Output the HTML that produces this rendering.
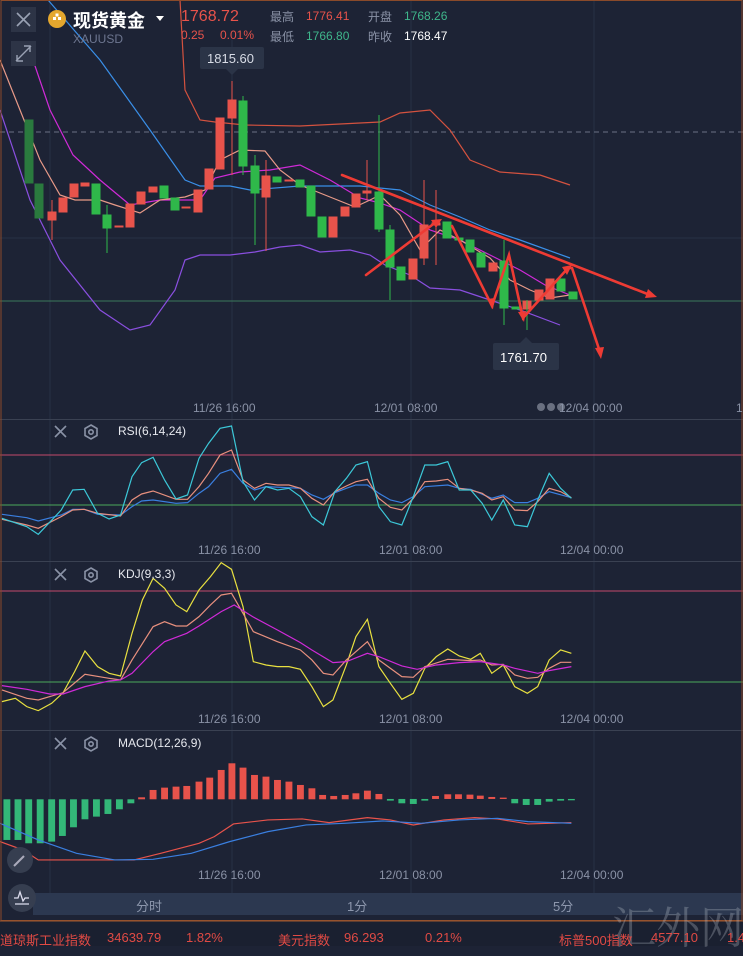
<!DOCTYPE html>
<html><head><meta charset="utf-8"><style>
*{margin:0;padding:0}
body{width:743px;height:946px;background:#1d2335;overflow:hidden;position:relative;font-family:"Liberation Sans","Noto Sans CJK SC",sans-serif}
.t{position:absolute;white-space:nowrap}
svg{position:absolute;left:0;top:0}
</style></head><body>
<svg width="743" height="946" viewBox="0 0 743 946">
<rect x="0" y="0" width="743" height="946" fill="#1d2335"/>
<g stroke="#283045" stroke-width="1">
<line x1="50" y1="0" x2="50" y2="893"/><line x1="232" y1="40" x2="232" y2="893"/><line x1="411" y1="0" x2="411" y2="893"/><line x1="594" y1="0" x2="594" y2="893"/>
<line x1="0" y1="238" x2="743" y2="238"/>
</g>
<line x1="0" y1="132" x2="743" y2="132" stroke="#6a7285" stroke-dasharray="5,4" stroke-width="1"/>
<line x1="0" y1="301" x2="743" y2="301" stroke="#3a7a5a" stroke-width="1"/>
<g stroke="#3a4152"><line x1="0" y1="419.5" x2="743" y2="419.5"/><line x1="0" y1="561.5" x2="743" y2="561.5"/><line x1="0" y1="730.5" x2="743" y2="730.5"/></g>
<g fill="none" stroke-width="1.2">
<polyline stroke="#d4523f" points="180,0 185,90 200,120 215,122 245,125 300,126 380,122 400,113 430,110 450,130 470,160 500,172 540,175 570,185"/>
<polyline stroke="#8a4fe0" points="0,110 30,200 60,260 100,310 130,330 150,325 175,290 185,260 200,255 230,255 255,252 280,247 300,245 320,252 350,250 370,255 385,265 410,275 430,288 460,290 490,300 520,310 560,325"/>
<polyline stroke="#3a8fe8" points="48,0 100,60 150,130 185,180 200,186 230,186 250,190 300,186 360,186 400,190 430,205 460,217 490,230 520,240 570,258"/>
<polyline stroke="#d02ad8" points="33,60 50,110 73,155 100,180 130,205 160,200 200,200 215,178 240,172 270,170 300,165 330,180 360,198 380,203 400,210 430,230 460,240 490,255 520,270 545,285 570,295"/>
<polyline stroke="#e89a88" points="0,60 20,110 40,160 60,195 75,200 100,200 115,205 140,213 160,200 185,197 205,190 220,160 240,150 265,151 280,170 300,185 330,197 355,207 370,200 380,195 400,215 420,250 440,230 460,240 490,258 510,280 530,290 550,298 570,295"/>
</g>
<g>
<g fill="#e8534b" stroke="#e8534b">
<rect x="48" y="212" width="8" height="8"/><rect x="59" y="198" width="8" height="14"/><rect x="70" y="184" width="8" height="13"/><rect x="81" y="183" width="8" height="3"/>
<rect x="115" y="226" width="8" height="1"/><rect x="126" y="204" width="8" height="23"/><rect x="137" y="192" width="8" height="12"/><rect x="149" y="187" width="8" height="5"/>
<rect x="182" y="207" width="8" height="1"/><rect x="194" y="190" width="8" height="22"/><rect x="205" y="169" width="8" height="20"/><rect x="216" y="118" width="8" height="51"/><rect x="228" y="100" width="8" height="18"/>
<rect x="262" y="176" width="8" height="21"/><rect x="285" y="180" width="8" height="1"/><rect x="329" y="217" width="8" height="20"/><rect x="341" y="207" width="8" height="9"/><rect x="352" y="194" width="8" height="13"/><rect x="363" y="191" width="8" height="2"/>
<rect x="409" y="259" width="8" height="20"/><rect x="420" y="225" width="8" height="33"/><rect x="432" y="223" width="8" height="2"/><rect x="489" y="263" width="8" height="8"/><rect x="523" y="301" width="8" height="8"/><rect x="535" y="290" width="8" height="10"/><rect x="546" y="279" width="8" height="20"/>
</g>
<g stroke="#e8534b" stroke-width="1"><line x1="52" y1="200" x2="52" y2="240"/><line x1="232" y1="81" x2="232" y2="175"/><line x1="266" y1="160" x2="266" y2="251"/><line x1="367" y1="160" x2="367" y2="200"/><line x1="424" y1="180" x2="424" y2="265"/><line x1="436" y1="190" x2="436" y2="265"/></g>
<g fill="#2fb84a" stroke="#2fb84a">
<rect x="25" y="120" width="8" height="63" fill="#2a7a3e" stroke="#2a7a3e"/><rect x="35" y="184" width="8" height="34" fill="#2a7a3e" stroke="#2a7a3e"/>
<rect x="92" y="184" width="8" height="30"/><rect x="103" y="215" width="8" height="13"/><rect x="160" y="186" width="8" height="12"/><rect x="171" y="198" width="8" height="12"/>
<rect x="239" y="101" width="8" height="65"/><rect x="251" y="166" width="8" height="27"/><rect x="273" y="177" width="8" height="5"/><rect x="296" y="180" width="8" height="7"/><rect x="307" y="186" width="8" height="30"/><rect x="318" y="217" width="8" height="20"/>
<rect x="375" y="192" width="8" height="37"/><rect x="386" y="230" width="8" height="37"/><rect x="397" y="267" width="8" height="13"/><rect x="443" y="222" width="8" height="16"/><rect x="455" y="238" width="8" height="2"/><rect x="466" y="240" width="8" height="12"/><rect x="477" y="253" width="8" height="14"/><rect x="500" y="261" width="8" height="47"/><rect x="512" y="307" width="8" height="2"/><rect x="557" y="279" width="8" height="12"/><rect x="569" y="292" width="8" height="7"/>
</g>
<g stroke="#2fb84a" stroke-width="1"><line x1="107" y1="205" x2="107" y2="253"/><line x1="243" y1="96" x2="243" y2="175"/><line x1="255" y1="155" x2="255" y2="245"/><line x1="379" y1="115" x2="379" y2="232"/><line x1="390" y1="225" x2="390" y2="300"/><line x1="504" y1="240" x2="504" y2="325"/><line x1="527" y1="300" x2="527" y2="330"/></g>
</g>
<g stroke="#ee3b34" stroke-width="2.6" fill="none" stroke-linecap="round">
<line x1="342" y1="175" x2="650" y2="295"/>
<polyline points="366,275 436,222"/>
<polyline points="452,226 492,306 509,255 523,318 568,268 572,268 600,352"/>
</g>
<g fill="#ee3b34"><polygon points="657,297 645,298 648,289"/><polygon points="601,359 595,348 604,347"/><polygon points="493,309 487,299 495,298"/><polygon points="442,219 436,228 431,220"/><polygon points="524,322 518,312 526,311"/><polygon points="572,265 567,275 562,267"/></g>
<rect x="200" y="47" width="64" height="22" rx="2" fill="#2b3447"/><polygon points="226,69 238,69 232,75" fill="#2b3447"/>
<rect x="493" y="343" width="66" height="27" rx="2" fill="#2b3447"/><polygon points="520,343 532,343 526,337" fill="#2b3447"/>
<g stroke="#c24a6a" stroke-width="1"><line x1="0" y1="455" x2="743" y2="455"/><line x1="0" y1="591" x2="743" y2="591"/></g>
<g stroke="#4caa5a" stroke-width="1"><line x1="0" y1="505" x2="743" y2="505"/><line x1="0" y1="682" x2="743" y2="682"/></g>
<g transform="translate(0,420) scale(0.3827,0.3333)" fill="none" stroke-width="1.2">
<polyline vector-effect="non-scaling-stroke" stroke="#3a7fe0" points="5,283 70,293 100,303 160,285 190,268 220,268 255,283 315,285 345,260 370,243 400,240 460,250 490,248 520,220 545,200 575,160 605,148 635,190 665,210 695,200 785,205 815,225 845,238 875,218 905,205 930,195 960,195 990,220 1020,240 1050,248 1080,230 1110,200 1170,195 1200,205 1230,208 1285,235 1315,225 1345,248 1378,248 1405,235 1435,215 1493,233"/>
<polyline vector-effect="non-scaling-stroke" stroke="#e8907e" points="5,298 70,315 100,325 160,290 190,270 220,268 255,280 315,288 345,240 370,222 400,213 460,238 490,238 520,200 545,160 575,105 605,90 635,180 665,205 695,190 725,195 755,195 785,205 815,235 845,255 875,215 905,198 930,185 960,178 990,235 1020,262 1050,270 1080,235 1110,185 1140,183 1170,178 1200,205 1230,210 1260,220 1285,240 1315,230 1345,270 1378,272 1405,245 1435,205 1465,215 1493,233"/>
<polyline vector-effect="non-scaling-stroke" stroke="#3cc8d8" points="5,295 70,320 100,343 160,270 190,210 220,208 255,280 285,297 315,285 345,170 370,128 400,112 430,180 460,237 490,225 520,115 545,70 575,25 605,18 635,185 665,240 695,200 725,210 755,205 785,230 815,290 845,315 875,215 905,175 930,135 960,125 990,260 1020,305 1050,315 1080,230 1110,135 1140,135 1170,125 1200,210 1230,210 1260,250 1285,300 1315,240 1345,315 1378,320 1405,240 1435,160 1465,205 1493,235"/>
<polyline vector-effect="non-scaling-stroke" stroke="#e8e040" points="5,845 40,835 70,860 100,872 135,850 165,818 195,755 222,693 255,740 285,760 315,768 345,640 372,540 400,475 430,505 460,555 488,575 520,510 550,470 578,428 605,448 635,560 662,725 695,735 725,740 755,740 785,748 815,800 845,860 870,840 905,735 930,650 960,598 990,740 1020,790 1050,838 1080,820 1110,745 1140,710 1170,687 1200,708 1230,718 1255,700 1285,760 1315,735 1345,800 1378,820 1405,800 1435,720 1465,690 1493,700"/>
<polyline vector-effect="non-scaling-stroke" stroke="#e8907e" points="5,810 70,835 100,840 165,818 222,763 285,775 315,780 345,720 400,620 430,605 460,618 488,618 520,590 550,555 578,525 605,520 635,580 662,635 725,665 785,690 815,720 845,760 870,765 905,720 960,665 990,720 1050,770 1080,772 1110,740 1170,718 1230,722 1255,720 1285,735 1315,733 1345,765 1378,775 1405,772 1435,745 1465,727 1493,727"/>
<polyline vector-effect="non-scaling-stroke" stroke="#d02ad8" points="5,797 70,808 130,822 165,822 222,800 285,783 315,780 345,760 400,695 430,665 488,640 520,618 578,575 612,555 660,590 725,630 785,668 815,690 870,728 905,725 960,700 990,710 1050,738 1090,748 1140,735 1200,728 1255,725 1315,735 1345,745 1405,760 1435,752 1493,740"/>
<g fill="#33b878">
<rect x="9" y="1138" width="18" height="122"/><rect x="38" y="1138" width="18" height="122"/><rect x="66" y="1138" width="18" height="132"/><rect x="96" y="1138" width="18" height="132"/><rect x="126" y="1138" width="18" height="127"/><rect x="154" y="1138" width="18" height="110"/><rect x="183" y="1138" width="18" height="84"/><rect x="213" y="1138" width="18" height="60"/><rect x="243" y="1138" width="18" height="52"/><rect x="273" y="1138" width="18" height="44"/><rect x="303" y="1138" width="18" height="30"/><rect x="333" y="1138" width="18" height="12"/>
<rect x="1011" y="1137" width="18" height="5"/><rect x="1041" y="1137" width="18" height="13"/><rect x="1071" y="1137" width="18" height="15"/><rect x="1101" y="1137" width="18" height="5"/>
<rect x="1336" y="1137" width="18" height="13"/><rect x="1366" y="1137" width="18" height="18"/><rect x="1396" y="1137" width="18" height="18"/><rect x="1426" y="1137" width="18" height="8"/><rect x="1456" y="1137" width="18" height="5"/><rect x="1484" y="1137" width="18" height="4"/>
</g>
<g fill="#e8534b">
<rect x="361" y="1132" width="18" height="6"/><rect x="391" y="1110" width="18" height="28"/><rect x="421" y="1103" width="18" height="35"/><rect x="451" y="1100" width="18" height="38"/><rect x="479" y="1098" width="18" height="40"/><rect x="511" y="1085" width="18" height="53"/><rect x="539" y="1073" width="18" height="65"/><rect x="569" y="1050" width="18" height="88"/><rect x="597" y="1030" width="18" height="108"/><rect x="626" y="1043" width="18" height="95"/><rect x="656" y="1065" width="18" height="73"/><rect x="686" y="1070" width="18" height="68"/><rect x="716" y="1080" width="18" height="58"/><rect x="746" y="1085" width="18" height="53"/><rect x="776" y="1095" width="18" height="43"/><rect x="806" y="1105" width="18" height="33"/><rect x="834" y="1125" width="18" height="13"/><rect x="863" y="1128" width="18" height="10"/><rect x="893" y="1125" width="18" height="13"/><rect x="921" y="1120" width="18" height="18"/><rect x="951" y="1112" width="18" height="26"/><rect x="981" y="1122" width="18" height="16"/>
<rect x="1129" y="1128" width="18" height="9"/><rect x="1161" y="1123" width="18" height="14"/><rect x="1189" y="1123" width="18" height="14"/><rect x="1219" y="1124" width="18" height="13"/><rect x="1246" y="1127" width="18" height="10"/><rect x="1276" y="1131" width="18" height="6"/><rect x="1306" y="1133" width="18" height="4"/>
</g>
<polyline vector-effect="non-scaling-stroke" stroke="#e8534b" points="0,1265 60,1290 100,1320 350,1320 420,1300 520,1270 560,1250 610,1212 700,1200 790,1197 860,1208 960,1193 1020,1200 1080,1215 1160,1200 1240,1193 1300,1197 1380,1212 1493,1208"/>
<polyline vector-effect="non-scaling-stroke" stroke="#3a7fe0" points="0,1210 100,1260 200,1300 300,1320 400,1318 500,1300 600,1265 700,1235 800,1215 900,1210 1000,1203 1100,1210 1200,1200 1300,1195 1380,1205 1493,1210"/>
</g>
<g stroke="#8a92a6" stroke-width="1.6" fill="none">
<path d="M55 426l11 11M66 426l-11 11"/><path d="M55 569l11 11M66 569l-11 11"/><path d="M55 738l11 11M66 738l-11 11"/>
<polygon points="91,425 97,428.5 97,435.5 91,439 85,435.5 85,428.5"/><circle cx="91" cy="432" r="2.2"/>
<polygon points="91,568 97,571.5 97,578.5 91,582 85,578.5 85,571.5"/><circle cx="91" cy="575" r="2.2"/>
<polygon points="91,737 97,740.5 97,747.5 91,751 85,747.5 85,740.5"/><circle cx="91" cy="744" r="2.2"/>
</g>
<rect x="11" y="7" width="25" height="25" fill="#2d3446"/><path d="M17 13l13 13M30 13l-13 13" stroke="#9aa2b4" stroke-width="1.6"/>
<rect x="11" y="41" width="25" height="25" fill="#2d3446"/><path d="M16 61l15-15M17 55v6h6M30 52v-6h-6" stroke="#9aa2b4" stroke-width="1.4" fill="none"/>
<circle cx="57" cy="19" r="9" fill="#e4a72e"/><g fill="#fff"><rect x="53" y="17" width="3" height="3"/><rect x="58" y="17" width="3" height="3"/><rect x="55.5" y="13.5" width="3" height="3"/></g>
<polygon points="156,16 164,16 160,21" fill="#fff"/>
<rect x="33" y="893" width="710" height="22" fill="#2c3850"/>
<circle cx="20" cy="860" r="13" fill="#363e50"/><path d="M14 866l10-10" stroke="#aab" stroke-width="2"/>
<circle cx="22" cy="898" r="14" fill="#363e50"/><path d="M14 898h4l2-6 3 9 2-3h4M15 904h14" stroke="#dde" stroke-width="1.3" fill="none"/>
<rect x="1" y="0.5" width="741" height="920" fill="none" stroke="#8a4a2a" stroke-width="1"/>
<rect x="0" y="921" width="743" height="25" fill="#1a2030"/>
<line x1="0" y1="921" x2="743" y2="921" stroke="#a25a30"/>
<circle cx="541" cy="407" r="4" fill="#6a7080"/><circle cx="551" cy="407" r="4" fill="#6a7080"/><circle cx="561" cy="407" r="4" fill="#6a7080"/>
</svg>

<div class="t" style="left:73px;top:7px;font-size:18px;font-weight:bold;color:#fff">现货黄金</div>
<div class="t" style="left:73px;top:32px;font-size:12px;color:#6d7690">XAUUSD</div>
<div class="t" style="left:181px;top:8px;font-size:16px;color:#e8534b">1768.72</div>
<div class="t" style="left:181px;top:28px;font-size:12px;color:#e8534b">0.25</div>
<div class="t" style="left:220px;top:28px;font-size:12px;color:#e8534b">0.01%</div>
<div class="t" style="left:270px;top:8px;font-size:12px;color:#8a92a6">最高</div>
<div class="t" style="left:306px;top:9px;font-size:12px;color:#e8534b">1776.41</div>
<div class="t" style="left:368px;top:8px;font-size:12px;color:#8a92a6">开盘</div>
<div class="t" style="left:404px;top:9px;font-size:12px;color:#3fb68b">1768.26</div>
<div class="t" style="left:270px;top:28px;font-size:12px;color:#8a92a6">最低</div>
<div class="t" style="left:306px;top:29px;font-size:12px;color:#3fb68b">1766.80</div>
<div class="t" style="left:368px;top:28px;font-size:12px;color:#8a92a6">昨收</div>
<div class="t" style="left:404px;top:29px;font-size:12px;color:#fff">1768.47</div>
<div class="t" style="left:207px;top:51px;font-size:13px;color:#d8dce6">1815.60</div>
<div class="t" style="left:500px;top:350px;font-size:13px;color:#fff">1761.70</div>

<div class="t" style="left:193px;top:401px;font-size:12px;color:#8a92a6">11/26 16:00</div>
<div class="t" style="left:374px;top:401px;font-size:12px;color:#8a92a6">12/01 08:00</div>
<div class="t" style="left:559px;top:401px;font-size:12px;color:#8a92a6">12/04 00:00</div>
<div class="t" style="left:736px;top:401px;font-size:12px;color:#8a92a6">1</div>
<div class="t" style="left:118px;top:424px;font-size:12px;color:#e6e8ee">RSI(6,14,24)</div>
<div class="t" style="left:198px;top:543px;font-size:12px;color:#8a92a6">11/26 16:00</div>
<div class="t" style="left:379px;top:543px;font-size:12px;color:#8a92a6">12/01 08:00</div>
<div class="t" style="left:560px;top:543px;font-size:12px;color:#8a92a6">12/04 00:00</div>
<div class="t" style="left:118px;top:567px;font-size:12px;color:#e6e8ee">KDJ(9,3,3)</div>
<div class="t" style="left:198px;top:712px;font-size:12px;color:#8a92a6">11/26 16:00</div>
<div class="t" style="left:379px;top:712px;font-size:12px;color:#8a92a6">12/01 08:00</div>
<div class="t" style="left:560px;top:712px;font-size:12px;color:#8a92a6">12/04 00:00</div>
<div class="t" style="left:118px;top:736px;font-size:12px;color:#e6e8ee">MACD(12,26,9)</div>
<div class="t" style="left:198px;top:868px;font-size:12px;color:#8a92a6">11/26 16:00</div>
<div class="t" style="left:379px;top:868px;font-size:12px;color:#8a92a6">12/01 08:00</div>
<div class="t" style="left:560px;top:868px;font-size:12px;color:#8a92a6">12/04 00:00</div>

<div class="t" style="left:136px;top:896px;font-size:13px;color:#8d97ad">分时</div>
<div class="t" style="left:347px;top:896px;font-size:13px;color:#8d97ad">1分</div>
<div class="t" style="left:553px;top:896px;font-size:13px;color:#8d97ad">5分</div>
<div class="t" style="left:612px;top:892px;font-size:44px;color:rgba(190,195,205,0.3);font-family:'Noto Serif CJK SC',serif">汇外网</div>

<div class="t" style="left:0;top:930px;font-size:13px;color:#e04a44">道琼斯工业指数</div>
<div class="t" style="left:107px;top:930px;font-size:13px;color:#e04a44">34639.79</div>
<div class="t" style="left:186px;top:930px;font-size:13px;color:#e04a44">1.82%</div>
<div class="t" style="left:278px;top:930px;font-size:13px;color:#e04a44">美元指数</div>
<div class="t" style="left:344px;top:930px;font-size:13px;color:#e04a44">96.293</div>
<div class="t" style="left:425px;top:930px;font-size:13px;color:#e04a44">0.21%</div>
<div class="t" style="left:559px;top:930px;font-size:13px;color:#e04a44">标普500指数</div>
<div class="t" style="left:651px;top:930px;font-size:13px;color:#e04a44">4577.10</div>
<div class="t" style="left:727px;top:930px;font-size:13px;color:#e04a44">1.4</div>
</body></html>
